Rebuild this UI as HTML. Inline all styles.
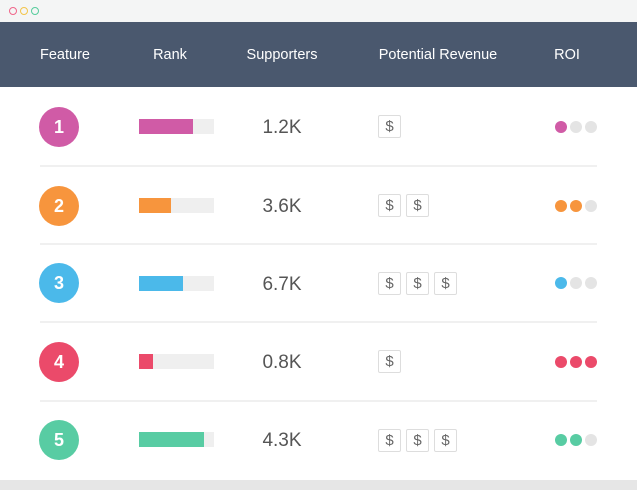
<!DOCTYPE html>
<html><head><style>
body{margin:0;width:637px;height:490px;overflow:hidden;background:#fff;font-family:"Liberation Sans",sans-serif;position:relative}
.tb{position:absolute;left:0;top:0;width:637px;height:22px;background:#f4f5f5}
.tl{position:absolute;top:7px;width:6px;height:6px;border-radius:50%;border:1.3px solid}
.hd{position:absolute;left:0;top:22px;width:637px;height:65px;background:#4a586e}
.h{position:absolute;top:25px;color:#fff;font-size:14.5px;transform:translateX(-50%);white-space:nowrap}
.sep{position:absolute;left:40px;width:557px;height:2px;background:#f0f0f0}
.c{position:absolute;left:39px;width:40px;height:40px;border-radius:50%;color:#fff;font-size:18px;font-weight:bold;line-height:41px;text-align:center}
.bar{position:absolute;left:139px;width:75px;height:15px;background:#efefef}
.bar i{position:absolute;left:0;top:0;height:15px}
.s{position:absolute;left:282px;transform:translateX(-50%);font-size:19px;color:#555}
.d{position:absolute;width:21px;height:21px;border:1px solid #ddd;border-radius:2px;color:#666;font-size:15px;line-height:22px;text-align:center}
.o{position:absolute;width:12px;height:12px;border-radius:50%;background:#e4e4e4}
.bt{position:absolute;left:0;top:480px;width:637px;height:10px;background:#e6e6e6}
</style></head><body>
<div class="tb"></div>
<div class="tl" style="left:9px;border-color:#f0668a"></div>
<div class="tl" style="left:20px;border-color:#f3c54a"></div>
<div class="tl" style="left:31px;border-color:#56cc9c"></div>
<div class="hd">
<div class="h" style="left:65px">Feature</div>
<div class="h" style="left:170px">Rank</div>
<div class="h" style="left:282px">Supporters</div>
<div class="h" style="left:438px">Potential Revenue</div>
<div class="h" style="left:567px">ROI</div>
</div>
<div class="sep" style="top:165px"></div>
<div class="sep" style="top:243px"></div>
<div class="sep" style="top:321px"></div>
<div class="sep" style="top:400px"></div>
<div class="bt"></div>

<div class="c" style="top:107px;background:#d05ba6">1</div>
<div class="bar" style="top:119px"><i style="width:54px;background:#d05ba6"></i></div>
<div class="s" style="top:117px">1.2K</div>
<div class="d" style="left:378px;top:115px">$</div>
<div class="o" style="left:555px;top:121px;background:#d05ba6"></div><div class="o" style="left:570px;top:121px"></div><div class="o" style="left:585px;top:121px"></div>

<div class="c" style="top:186px;background:#f7953d">2</div>
<div class="bar" style="top:198px"><i style="width:32px;background:#f7953d"></i></div>
<div class="s" style="top:196px">3.6K</div>
<div class="d" style="left:378px;top:194px">$</div><div class="d" style="left:406px;top:194px">$</div>
<div class="o" style="left:555px;top:200px;background:#f7953d"></div><div class="o" style="left:570px;top:200px;background:#f7953d"></div><div class="o" style="left:585px;top:200px"></div>

<div class="c" style="top:263px;background:#4bb9ea">3</div>
<div class="bar" style="top:276px"><i style="width:44px;background:#4bb9ea"></i></div>
<div class="s" style="top:274px">6.7K</div>
<div class="d" style="left:378px;top:272px">$</div><div class="d" style="left:406px;top:272px">$</div><div class="d" style="left:434px;top:272px">$</div>
<div class="o" style="left:555px;top:277px;background:#4bb9ea"></div><div class="o" style="left:570px;top:277px"></div><div class="o" style="left:585px;top:277px"></div>

<div class="c" style="top:342px;background:#eb4a6a">4</div>
<div class="bar" style="top:354px"><i style="width:14px;background:#eb4a6a"></i></div>
<div class="s" style="top:352px">0.8K</div>
<div class="d" style="left:378px;top:350px">$</div>
<div class="o" style="left:555px;top:356px;background:#eb4a6a"></div><div class="o" style="left:570px;top:356px;background:#eb4a6a"></div><div class="o" style="left:585px;top:356px;background:#eb4a6a"></div>

<div class="c" style="top:420px;background:#58cca3">5</div>
<div class="bar" style="top:432px"><i style="width:65px;background:#58cca3"></i></div>
<div class="s" style="top:430px">4.3K</div>
<div class="d" style="left:378px;top:429px">$</div><div class="d" style="left:406px;top:429px">$</div><div class="d" style="left:434px;top:429px">$</div>
<div class="o" style="left:555px;top:434px;background:#58cca3"></div><div class="o" style="left:570px;top:434px;background:#58cca3"></div><div class="o" style="left:585px;top:434px"></div>
</body></html>
